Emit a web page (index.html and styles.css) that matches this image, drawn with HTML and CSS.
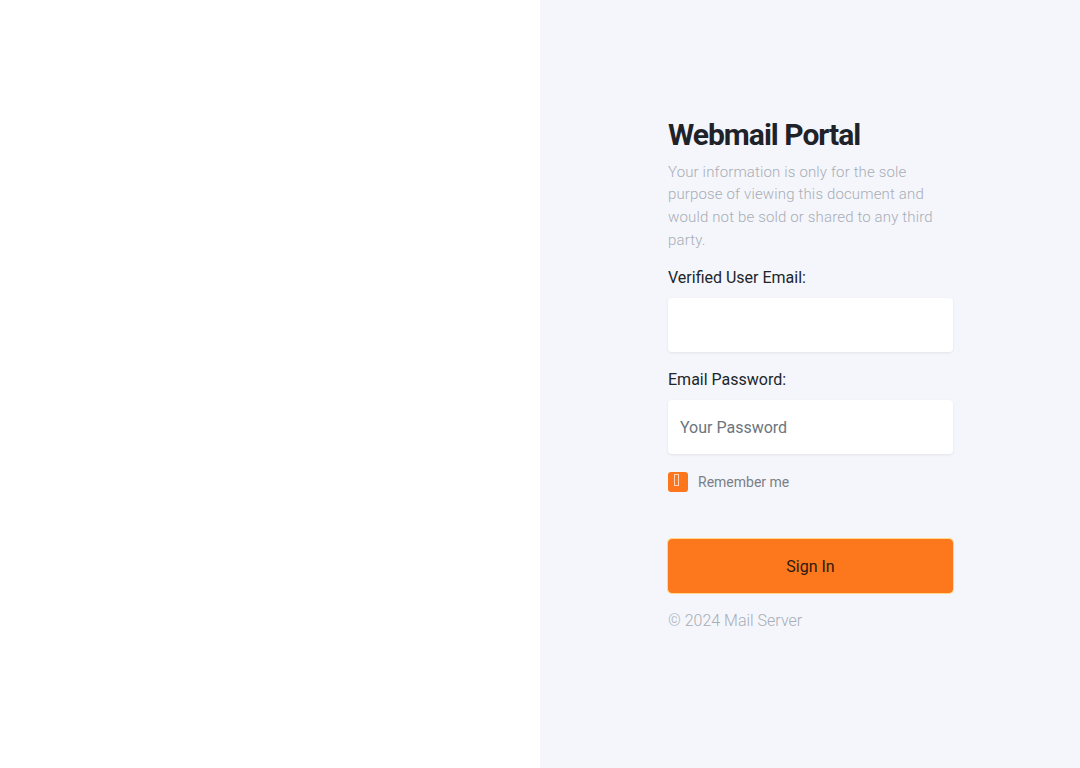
FILE: index.html
```html
<!DOCTYPE html>
<html lang="en">
<head>
  <meta charset="UTF-8" />
  <meta name="viewport" content="width=device-width, initial-scale=1" />
  <title>Webmail Portal</title>
  <link rel="stylesheet" href="styles.css">
</head>
<body>
  <div class="pagina">
    <div class="lado-esquerdo"></div>
    <div class="lado-direito">
      <div class="caixa">
        <h1 class="titulo">Webmail Portal</h1>
        <p class="aviso">Your information is only for the sole purpose of viewing this document and would not be sold or shared to any third party.</p>

        <label for="email">Verified User Email:</label>
        <input type="email" id="email">

        <label for="senha">Email Password:</label>
        <input type="password" id="senha" placeholder="Your Password">

        <div class="lembrar">
          <span class="check"><span class="tofu"></span></span>
          <span>Remember me</span>
        </div>

        <button type="button">Sign In</button>

        <div class="rodape">&copy; 2024 Mail Server</div>
      </div>
    </div>
  </div>
</body>
</html>
```
FILE: styles.css
```css
body {
  font-family: Roboto, "Liberation Sans", sans-serif;
  margin: 0;
  padding: 0;
  color: #212529;
}
.pagina {
  display: flex;
  height: 768px;
}
.lado-esquerdo {
  width: 540px;
  background: #fff;
}
.lado-direito {
  flex: 1;
  background: #f4f6fc;
  display: flex;
  align-items: center;
  justify-content: center;
}
.caixa {
  width: 285px;
  margin-left: 1px;
  padding-bottom: 21px;
}
.titulo {
  font-size: 30px;
  font-weight: 700;
  letter-spacing: -1px;
  color: #1f2329;
  margin: 0 0 8px;
  line-height: 36px;
}
.aviso {
  font-size: 15px;
  font-weight: 300;
  letter-spacing: 0.15px;
  color: #a9adb4;
  line-height: 22.6px;
  margin: 0 0 15px;
}
label {
  display: block;
  font-size: 16px;
  color: #212529;
  margin-bottom: 8px;
  line-height: 24px;
}
input {
  display: block;
  width: 100%;
  height: 54px;
  box-sizing: border-box;
  border: none;
  border-radius: 4px;
  background: #fff;
  padding: 0 12px;
  font-family: inherit;
  font-size: 16px;
  color: #495057;
  margin-bottom: 16px;
  box-shadow: 0 1px 3px rgba(0,0,0,0.08);
}
input::placeholder {
  color: #6c757d;
}
.lembrar {
  display: flex;
  align-items: center;
  gap: 10px;
  margin-top: 18px;
  font-size: 14px;
  color: #7a7f86;
}
.check {
  width: 20px;
  height: 20px;
  background: #fd761c;
  border-radius: 3px;
  display: flex;
}
.tofu {
  width: 3px;
  height: 10px;
  margin: 2px 0 0 6px;
  border: 1px solid rgba(255,255,255,0.7);
}
button {
  display: block;
  width: 100%;
  height: 54px;
  margin-top: 47px;
  background: #fd771c;
  border: 1px solid #fd771c;
  border-radius: 4px;
  box-shadow: 0 0 0 1px #ffd68a;
  font-family: inherit;
  font-size: 16px;
  color: #2b1a10;
  cursor: pointer;
}
.rodape {
  margin-top: 18px;
  font-size: 16px;
  font-weight: 300;
  color: #a9adb4;
}
```
